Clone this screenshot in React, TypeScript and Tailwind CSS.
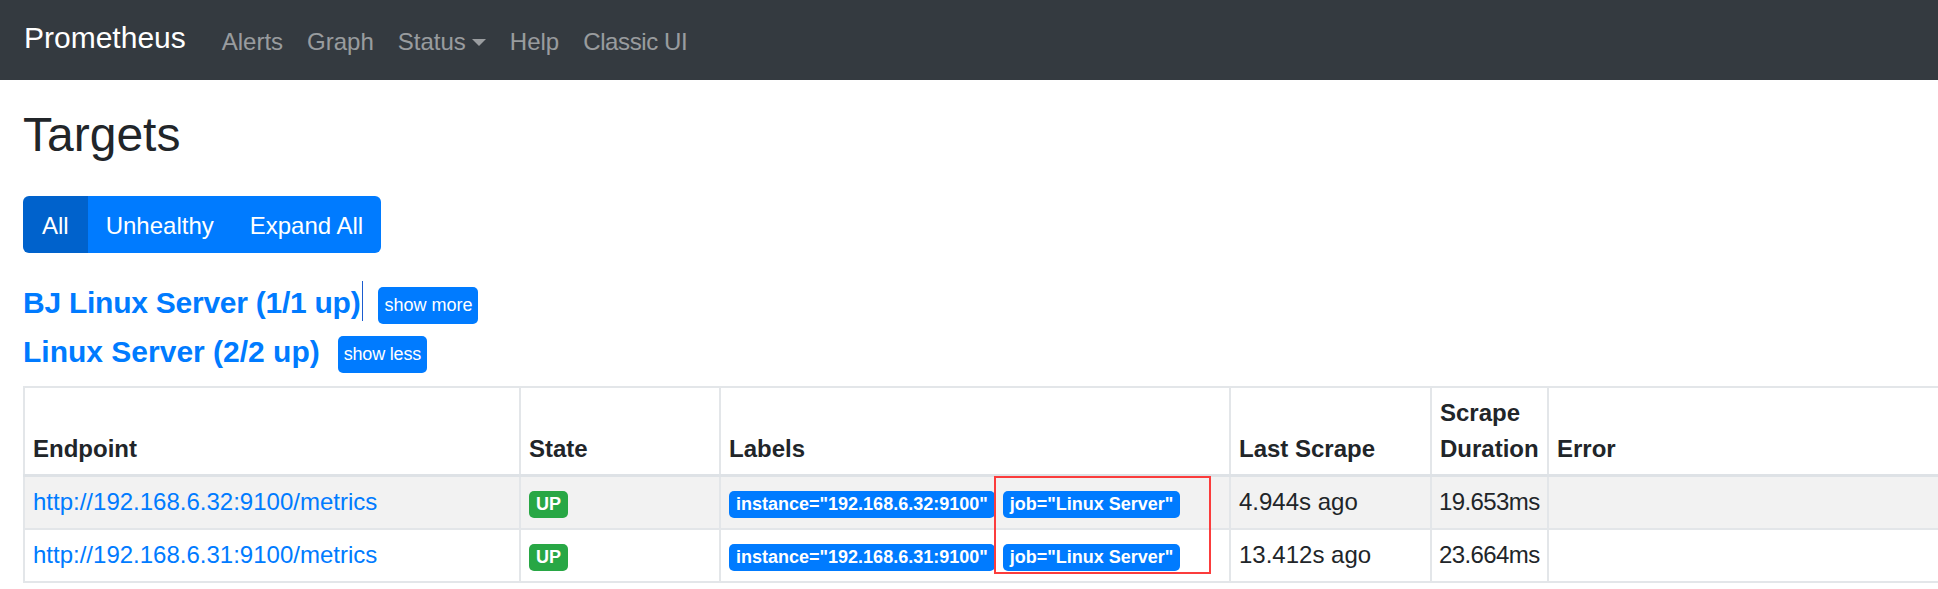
import React from "react";

const rows = [
  {
    ep: "http://192.168.6.32:9100/metrics",
    inst: "192.168.6.32:9100",
    last: "4.944s ago",
    dur: "19.653ms",
    striped: true,
  },
  {
    ep: "http://192.168.6.31:9100/metrics",
    inst: "192.168.6.31:9100",
    last: "13.412s ago",
    dur: "23.664ms",
    striped: false,
  },
];

export default function App() {
  return (
    <div className="w-full min-h-[589px] overflow-hidden bg-white text-[#212529] font-['Liberation_Sans',Arial,sans-serif]">
      <nav className="h-[80px] bg-[#343a40] flex items-center px-[24px] pt-[3px]">
        <a className="text-white text-[30px] leading-[42px] mr-[24px] mb-[8px]">Prometheus</a>
        <div className="flex items-center text-[24px] leading-[36px] text-white/50">
          <a className="px-[12px]">Alerts</a>
          <a className="px-[12px]">Graph</a>
          <a className="px-[12px] flex items-center">
            Status
            <span className="ml-[6px] mt-[2px] inline-block w-0 h-0 border-t-[7px] border-x-[7px] border-x-transparent border-t-white/50" />
          </a>
          <a className="px-[12px]">Help</a>
          <a className="px-[12px] tracking-[-0.4px]">Classic UI</a>
        </div>
      </nav>

      <main className="pl-[23px]">
        <h2 className="mt-[26px] text-[48px] leading-[57.6px] font-medium">Targets</h2>

        <div className="mt-[32px] flex">
          <div className="flex h-[57px] rounded-[6px] overflow-hidden text-white text-[24px] leading-[36px]">
            <button className="bg-[#0062cc] px-[19px] pt-[3px]">All</button>
            <button className="bg-[#007bff] px-[18px] pt-[3px]">Unhealthy</button>
            <button className="bg-[#007bff] px-[18px] pt-[3px]">Expand All</button>
          </div>
        </div>

        <div className="mt-[28px] flex items-center h-[49px]">
          <span className="relative mb-[5px] text-[30px] leading-[36px] font-bold text-[#007bff] tracking-[-0.25px]">
            BJ Linux Server (1/1 up)
            <span className="absolute right-[-3px] top-[-4px] h-[40px] w-px bg-[#1b5ccf]" />
          </span>
          <button className="ml-[18px] h-[37px] px-[6px] rounded-[5px] bg-[#007bff] text-white text-[18px] leading-[27px]">
            show more
          </button>
        </div>
        <div className="flex items-center h-[49px]">
          <span className="mb-[5px] text-[30px] leading-[36px] font-bold text-[#007bff]">
            Linux Server (2/2 up)
          </span>
          <button className="ml-[18px] h-[37px] px-[6px] rounded-[5px] bg-[#007bff] text-white text-[18px] leading-[27px] tracking-[-0.2px]">
            show less
          </button>
        </div>

        <div className="relative mt-[7px]">
          <table className="table-fixed border-collapse w-[1940px] text-[24px] leading-[36px]">
            <colgroup>
              <col className="w-[496px]" />
              <col className="w-[200px]" />
              <col className="w-[510px]" />
              <col className="w-[201px]" />
              <col className="w-[117px]" />
              <col />
            </colgroup>
            <thead>
              <tr>
                {["Endpoint", "State", "Labels", "Last Scrape", "Scrape Duration", "Error"].map((h) => (
                  <th
                    key={h}
                    className="border-2 border-[#e3e6e9] border-b-[3px] border-b-[#dee2e6] px-[8px] py-[7px] text-left align-bottom font-bold"
                  >
                    {h}
                  </th>
                ))}
              </tr>
            </thead>
            <tbody>
              {rows.map((r) => (
                <tr key={r.ep} className={r.striped ? "bg-[#f2f2f2]" : "bg-white"}>
                  <td className="border-2 border-[#e3e6e9] px-[8px] py-[7.5px] align-middle">
                    <a className="text-[#007bff]">{r.ep}</a>
                  </td>
                  <td className="border-2 border-[#e3e6e9] px-[8px] py-[7.5px] align-middle">
                    <span className="inline-block px-[7px] py-[4.5px] text-[18px] leading-none font-bold rounded-[5px] text-white bg-[#28a745]">
                      UP
                    </span>
                  </td>
                  <td className="border-2 border-[#e3e6e9] px-[8px] py-[7.5px] align-middle whitespace-nowrap">
                    <span className="inline-block mr-[8px] px-[7px] py-[4.5px] text-[18px] leading-none font-bold rounded-[5px] text-white bg-[#007bff]">
                      instance="{r.inst}"
                    </span>
                    <span className="inline-block px-[7px] py-[4.5px] text-[18px] leading-none font-bold rounded-[5px] text-white bg-[#007bff]">
                      job="Linux Server"
                    </span>
                  </td>
                  <td className="border-2 border-[#e3e6e9] px-[8px] py-[7.5px] align-middle">{r.last}</td>
                  <td className="border-2 border-[#e3e6e9] px-[7px] py-[7.5px] align-middle whitespace-nowrap tracking-[-0.6px]">
                    {r.dur}
                  </td>
                  <td className="border-2 border-[#e3e6e9] px-[8px] py-[7.5px] align-middle"></td>
                </tr>
              ))}
            </tbody>
          </table>
          <div className="absolute left-[971px] top-[90px] w-[217px] h-[98px] border-2 border-[#fb3c3c]" />
        </div>
      </main>
    </div>
  );
}
